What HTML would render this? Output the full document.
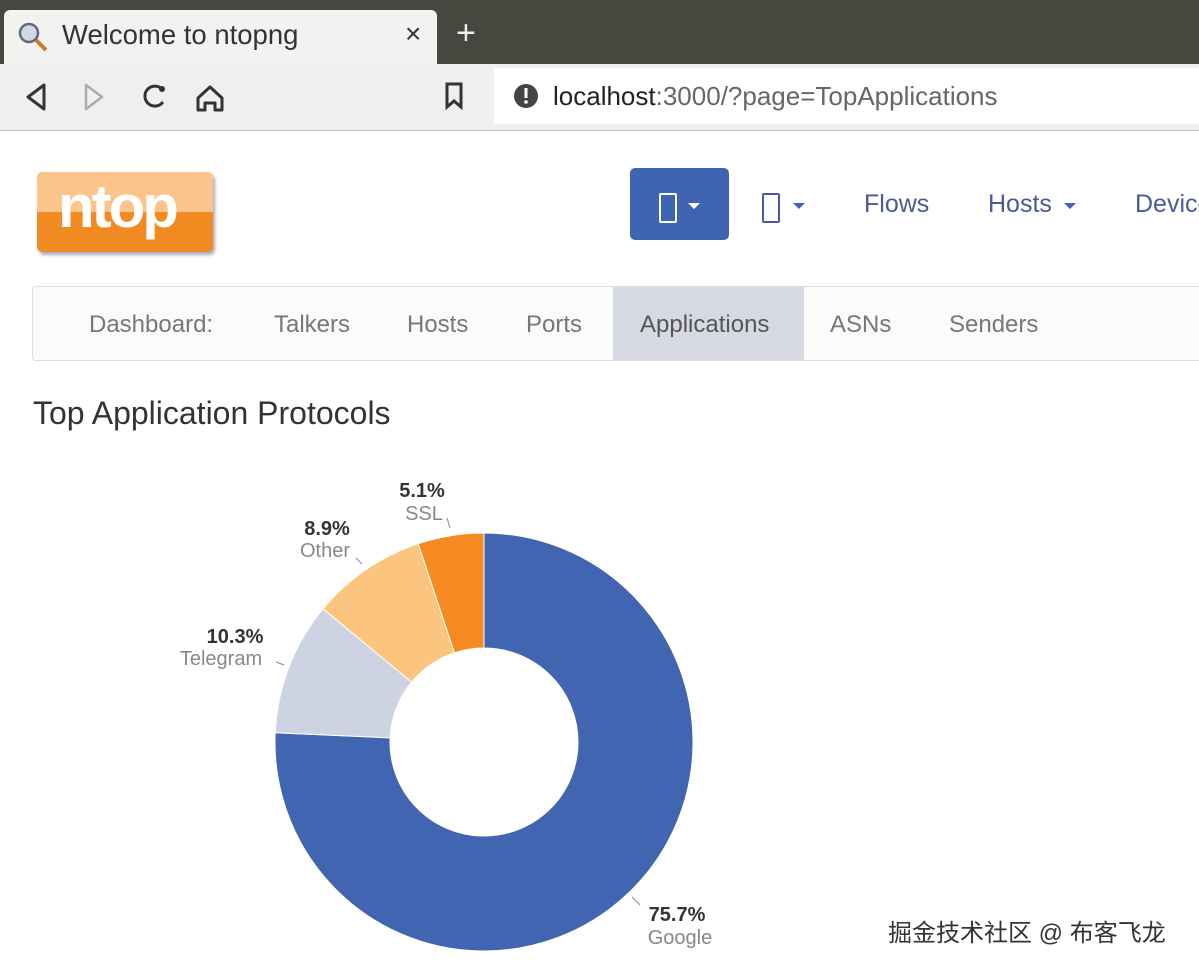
<!DOCTYPE html>
<html><head><meta charset="utf-8"><style>
body{margin:0;width:1199px;height:967px;overflow:hidden;background:#fff;font-family:"Liberation Sans",sans-serif;position:relative}
.a{position:absolute}
.tabbar{left:0;top:0;width:1199px;height:64px;background:#48473f}
.tab{left:4px;top:10px;width:433px;height:56px;background:#f2f2f0;border-radius:6px 6px 0 0}
.toolbar{left:0;top:64px;width:1199px;height:66px;background:#efefed;border-bottom:1px solid #c8c8c8}
.url{left:494px;top:68px;width:705px;height:56px;background:#fff}
.nav{color:#4a5a9a;font-size:25px;top:190px}
.sub{left:32px;top:286px;width:1180px;height:73px;border:1px solid #ddd;border-radius:4px;background:#fbfbfb}
.sub span{position:absolute;top:24px;font-size:24px;color:#777}
</style></head><body>
<div class="a tabbar"></div>
<div class="a tab"></div>
<svg class="a" style="left:16px;top:20px" width="34" height="34"><circle cx="13" cy="13" r="9" fill="#cfd8e6" stroke="#667" stroke-width="2.5"/><path d="M20 20L30 30" stroke="#d07a20" stroke-width="4"/></svg>
<div class="a" style="left:62px;top:19px;font-size:27.5px;color:#333">Welcome to ntopng</div>
<div class="a" style="left:405px;top:18px;font-size:28px;color:#333">×</div>
<div class="a" style="left:456px;top:14px;font-size:34px;color:#eee">+</div>
<div class="a toolbar"></div>
<div class="a url"></div>
<svg class="a" style="left:20px;top:80px" width="220" height="34">
<path d="M24 5L8 17L24 29Z" fill="none" stroke="#333" stroke-width="3" stroke-linejoin="round"/>
<path d="M66 5L82 17L66 29Z" fill="none" stroke="#aab" stroke-width="2.5" stroke-linejoin="round"/>
<path d="M142 9A10 10 0 1 0 143 22" fill="none" stroke="#333" stroke-width="3"/><circle cx="142" cy="9" r="3" fill="#333"/>
<path d="M178 18L190 7L202 18V30H195V23H185V30H178Z" fill="none" stroke="#333" stroke-width="3" stroke-linejoin="round"/>
</svg>
<svg class="a" style="left:444px;top:82px" width="20" height="28"><path d="M3 2H17V25L10 19L3 25Z" fill="none" stroke="#333" stroke-width="3"/></svg>
<svg class="a" style="left:512px;top:82px" width="28" height="28"><circle cx="14" cy="14" r="12" fill="#444"/><rect x="12.5" y="6" width="3" height="10" fill="#fff"/><circle cx="14" cy="20" r="1.8" fill="#fff"/></svg>
<div class="a" style="left:553px;top:81px;font-size:26px;color:#222">localhost<span style="color:#666">:3000/?page=TopApplications</span></div>
<div class="a" style="left:37px;top:172px;width:176px;height:80px;border-radius:5px;background:linear-gradient(#fac48a 0 50%,#f28a22 50%);box-shadow:2px 3px 3px #aab"></div>
<div class="a" style="left:58px;top:172px;font-size:60px;font-weight:bold;color:#fff;letter-spacing:-3px">ntop</div>
<div class="a" style="left:630px;top:168px;width:99px;height:72px;background:#3f64b1;border-radius:5px"></div>
<div class="a" style="left:659px;top:193px;width:14px;height:26px;border:2px solid #fff;border-radius:2px"></div>
<div class="a" style="left:688px;top:203px;border:6px solid transparent;border-top:6px solid #fff"></div>
<div class="a" style="left:762px;top:193px;width:14px;height:26px;border:2px solid #4a5a9a;border-radius:2px"></div>
<div class="a" style="left:793px;top:203px;border:6px solid transparent;border-top:6px solid #3f64b1"></div>
<div class="a nav" style="left:864px">Flows</div>
<div class="a nav" style="left:988px">Hosts</div>
<div class="a" style="left:1064px;top:203px;border:6px solid transparent;border-top:6px solid #3f64b1"></div>
<div class="a nav" style="left:1135px">Devices</div>
<div class="a sub">
<div class="a" style="left:580px;top:0;width:191px;height:73px;background:#d6d9e2"></div>
<span style="left:56px">Dashboard:</span><span style="left:241px">Talkers</span><span style="left:374px">Hosts</span><span style="left:493px">Ports</span><span style="left:607px;color:#555">Applications</span><span style="left:797px">ASNs</span><span style="left:916px">Senders</span>
</div>
<div class="a" style="left:33px;top:395px;font-size:32px;color:#333">Top Application Protocols</div>
<svg class="a" style="left:0;top:0" width="1199" height="967">
<path d="M484 533A209 209 0 1 1 275.2 732.8L390.1 737.9A94 94 0 1 0 484 648Z" fill="#4165b0" stroke="#fff"/>
<path d="M275.2 732.8A209 209 0 0 1 323 608.8L411.6 682.1A94 94 0 0 0 390.1 737.9Z" fill="#cdd3e2" stroke="#fff"/>
<path d="M323 608.8A209 209 0 0 1 418.2 543.7L454.4 652.8A94 94 0 0 0 411.6 682.1Z" fill="#fbc57f" stroke="#fff"/>
<path d="M418.2 543.7A209 209 0 0 1 484 533L484 648A94 94 0 0 0 454.4 652.8Z" fill="#f58a22" stroke="#fff"/>
<g stroke="#888" fill="none"><path d="M447 518L450 528"/><path d="M356 558L362 564"/><path d="M276 662L284 665"/><path d="M632 897L640 905"/></g>
<g font-family="Liberation Sans,sans-serif" font-size="20" text-anchor="middle">
<text x="422" y="497" font-weight="bold" fill="#333">5.1%</text><text x="424" y="520" fill="#888">SSL</text>
<text x="327" y="535" font-weight="bold" fill="#333">8.9%</text><text x="325" y="557" fill="#888">Other</text>
<text x="235" y="643" font-weight="bold" fill="#333">10.3%</text><text x="221" y="665" fill="#888">Telegram</text>
<text x="677" y="921" font-weight="bold" fill="#333">75.7%</text><text x="680" y="944" fill="#888">Google</text>
</g></svg>
<div class="a" style="left:888px;top:913px;font-size:24px;color:#333;font-family:'Liberation Sans','Noto Sans CJK SC',sans-serif">掘金技术社区 @ 布客飞龙</div>
</body></html>
